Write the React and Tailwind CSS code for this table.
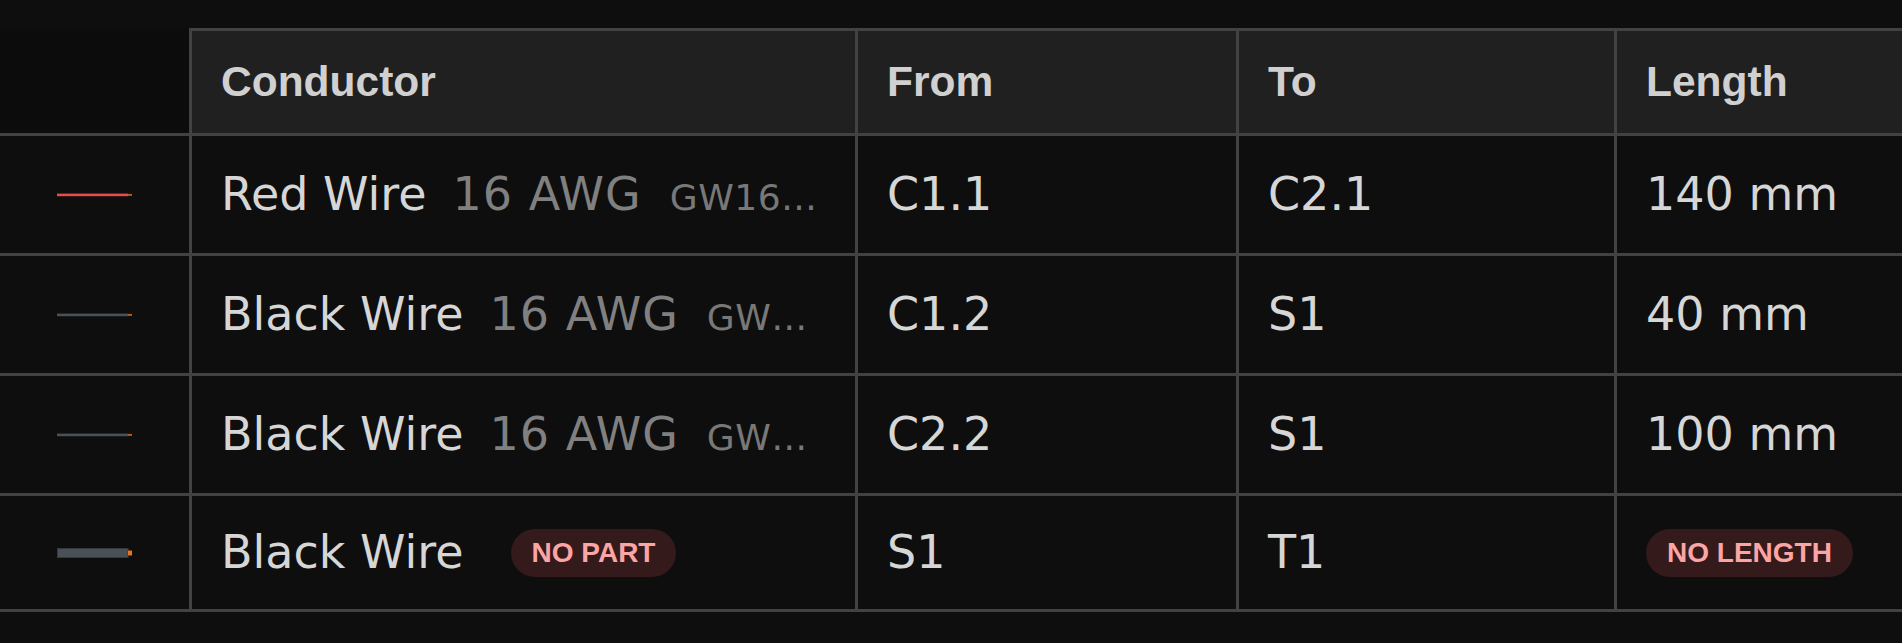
import React from 'react';

const ROWS = [
  { wire: 'red', name: 'Red Wire', gauge: '16 AWG', part: 'GW16-RED-0100', from: 'C1.1', to: 'C2.1', length: '140 mm' },
  { wire: 'black', name: 'Black Wire', gauge: '16 AWG', part: 'GW16-BLK-0040', from: 'C1.2', to: 'S1', length: '40 mm' },
  { wire: 'black', name: 'Black Wire', gauge: '16 AWG', part: 'GW16-BLK-0100', from: 'C2.2', to: 'S1', length: '100 mm' },
  { wire: 'cable', name: 'Black Wire', gauge: null, part: null, from: 'S1', to: 'T1', length: null },
];

function WireIcon({ kind }) {
  if (kind === 'cable') {
    return (
      <svg width="76" height="10" viewBox="0 0 76 10" className="block mx-auto">
        <rect x="0.5" y="0.5" width="70.5" height="9" fill="#4a5057" stroke="#363a3f" />
        <rect x="71" y="2.5" width="4" height="5" fill="#e8741b" />
      </svg>
    );
  }
  const color = kind === 'red' ? '#ec4a4a' : '#4a5057';
  return (
    <svg width="76" height="4" viewBox="0 0 76 4" className="block mx-auto">
      <rect x="0" y="0.6" width="71" height="2.6" fill={color} />
      <rect x="71" y="0.9" width="4" height="2" fill="#b85a1c" />
    </svg>
  );
}

function Badge({ children }) {
  return (
    <span className="flex items-center h-[48px] px-[21px] rounded-full bg-[#351a1b] text-[#fca5a5] text-[28px] font-bold leading-none whitespace-nowrap font-['Liberation_Sans',Arial,sans-serif]">
      {children}
    </span>
  );
}

export default function App() {
  const th = 'h-[108px] border-t-[3px] border-b-[3px] border-l-[3px] border-[#424242] bg-[#202020] pl-[29px] text-left align-middle text-[42.5px] font-bold text-[#d0d0d0] font-["Liberation_Sans",Arial,sans-serif]';
  const td = 'border-b-[3px] border-l-[3px] border-[#424242] pl-[29px] align-middle text-[46px] text-[#d6d6d6] whitespace-nowrap';

  return (
    <div className="min-h-screen w-full overflow-hidden bg-[#0e0e0e] pt-[28px] font-['DejaVu_Sans',sans-serif]">
      <table className="table-fixed border-separate border-spacing-0 w-[2014px]">
        <colgroup>
          <col className="w-[189px]" />
          <col className="w-[666px]" />
          <col className="w-[381px]" />
          <col className="w-[378px]" />
          <col className="w-[400px]" />
        </colgroup>
        <thead>
          <tr>
            <th className="h-[108px] border-b-[3px] border-[#424242] bg-[#0c0c0c]"></th>
            <th className={th}>Conductor</th>
            <th className={th}>From</th>
            <th className={th}>To</th>
            <th className={th}>Length</th>
          </tr>
        </thead>
        <tbody>
          {ROWS.map((r, i) => (
            <tr key={i} className={i === ROWS.length - 1 ? 'h-[116px]' : 'h-[120px]'}>
              <td className="border-b-[3px] border-[#424242] align-middle">
                <WireIcon kind={r.wire} />
              </td>
              <td className={td + ' pr-[32px]'}>
                {r.gauge ? (
                  <div className="flex items-baseline min-w-0">
                    <span className="shrink-0">{r.name}</span>
                    <span className="shrink-0 ml-[26px] tracking-[1px] text-[#808080]">{r.gauge}</span>
                    <span className="ml-[28px] min-w-0 truncate text-[36px] tracking-[0.5px] text-[#787878]">{r.part}</span>
                  </div>
                ) : (
                  <div className="flex items-center">
                    <span className="shrink-0">{r.name}</span>
                    <div className="ml-[47px] flex">
                      <Badge>NO PART</Badge>
                    </div>
                  </div>
                )}
              </td>
              <td className={td}>{r.from}</td>
              <td className={td}>{r.to}</td>
              <td className={td}>
                {r.length ? r.length : (
                  <div className="flex items-center">
                    <Badge>NO LENGTH</Badge>
                  </div>
                )}
              </td>
            </tr>
          ))}
        </tbody>
      </table>
    </div>
  );
}
